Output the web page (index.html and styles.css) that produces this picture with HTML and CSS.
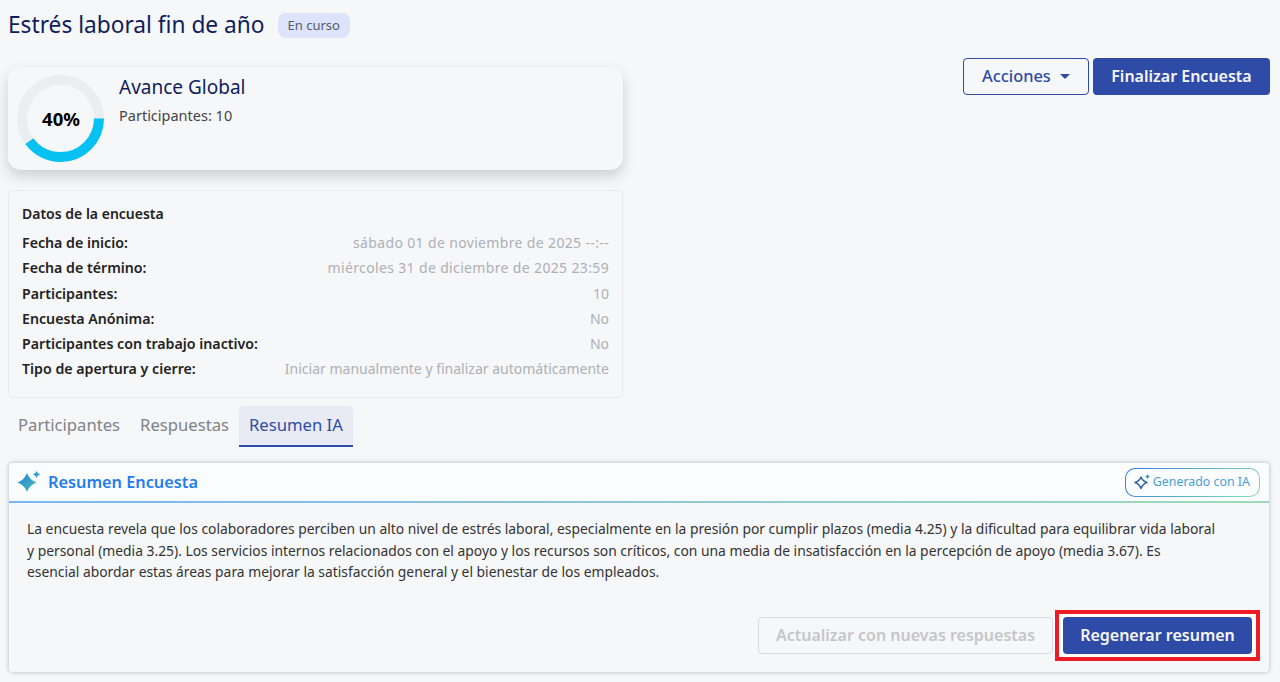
FILE: index.html
```html
<!DOCTYPE html>
<html lang="es">
<head>
    <meta charset="UTF-8">
    <meta name="viewport" content="width=device-width, initial-scale=1.0">
    <title>Estrés laboral fin de año</title>
    <link rel="stylesheet" href="styles.css">
</head>
<body>
    <div class="page-title">
        <h1>Estrés laboral fin de año</h1>
        <span class="status-badge">En curso</span>
    </div>

    <div class="top-row">
        <div class="left-col">
            <div class="progress-card">
                <div class="donut">
                    <svg width="87" height="87" viewBox="0 0 87 87">
                        <circle cx="43.5" cy="43.5" r="38.5" fill="none" stroke="#ebeef0" stroke-width="10"/>
                        <circle cx="43.5" cy="43.5" r="38.5" fill="none" stroke="#06c1f1" stroke-width="10" pathLength="100" stroke-dasharray="40 60"/>
                    </svg>
                    <span class="donut-label">40%</span>
                </div>
                <div class="progress-info">
                    <h2>Avance Global</h2>
                    <p>Participantes: 10</p>
                </div>
            </div>

            <div class="data-card">
                <h3>Datos de la encuesta</h3>
                <div class="data-row"><strong>Fecha de inicio:</strong><span class="data-date">sábado 01 de noviembre de 2025 --:--</span></div>
                <div class="data-row"><strong>Fecha de término:</strong><span class="data-date">miércoles 31 de diciembre de 2025 23:59</span></div>
                <div class="data-row"><strong>Participantes:</strong><span>10</span></div>
                <div class="data-row"><strong>Encuesta Anónima:</strong><span>No</span></div>
                <div class="data-row"><strong>Participantes con trabajo inactivo:</strong><span>No</span></div>
                <div class="data-row"><strong>Tipo de apertura y cierre:</strong><span>Iniciar manualmente y finalizar automáticamente</span></div>
            </div>
        </div>

        <div class="actions">
            <button type="button" class="btn btn-outline">Acciones <span class="caret"></span></button>
            <button type="button" class="btn btn-primary btn-finish">Finalizar Encuesta</button>
        </div>
    </div>

    <div class="tabs">
        <div class="tab">Participantes</div>
        <div class="tab">Respuestas</div>
        <div class="tab active">Resumen IA</div>
    </div>

    <div class="summary-card">
        <div class="summary-header">
            <div class="summary-title">
                <svg width="24" height="24" viewBox="0 0 24 24">
                    <defs>
                        <linearGradient id="sparkGrad" x1="0" y1="0" x2="1" y2="1">
                            <stop offset="0" stop-color="#1a7df2"/>
                            <stop offset="1" stop-color="#4fc3a1"/>
                        </linearGradient>
                    </defs>
                    <path d="M10 3Q12.500 10 19.500 12.500 12.500 15 10 22 7.500 15 .5 12.500 7.500 10 10 3z" fill="url(#sparkGrad)"/>
                    <path d="M19.500 1Q20.300 3.700 23 4.500 20.300 5.300 19.500 8 18.700 5.300 16 4.500 18.700 3.700 19.500 1z" fill="#2f9fd8"/>
                </svg>
                <span>Resumen Encuesta</span>
            </div>
            <div class="ia-badge">
                <svg width="17" height="17" viewBox="0 0 17 17">
                    <path d="M7 4Q8.500 8 13 9.500 8.500 11 7 15.500 5.500 11 1 9.500 5.500 8 7 4z" fill="none" stroke="#2f5fa8" stroke-width="1.400" stroke-linejoin="round"/>
                    <path d="M13.500 1Q14 3 16 3.500 14 4 13.500 6 13 4 11 3.500 13 3 13.500 1z" fill="#3a8fb0"/>
                </svg>
                <span>Generado con IA</span>
            </div>
        </div>
        <p class="summary-text">La encuesta revela que los colaboradores perciben un alto nivel de estrés laboral, especialmente en la presión por cumplir plazos (media 4.25) y la dificultad para equilibrar vida laboral y personal (media 3.25). Los servicios internos relacionados con el apoyo y los recursos son críticos, con una media de insatisfacción en la percepción de apoyo (media 3.67). Es esencial abordar estas áreas para mejorar la satisfacción general y el bienestar de los empleados.</p>
        <div class="summary-footer">
            <button type="button" class="btn btn-disabled">Actualizar con nuevas respuestas</button>
            <div class="highlight">
                <button type="button" class="btn btn-primary btn-regen">Regenerar resumen</button>
            </div>
        </div>
    </div>
</body>
</html>
```

FILE: styles.css
```css
* {
    box-sizing: border-box;
}
body {
    margin: 0;
    padding: 0 10px 0 8px;
    height: 682px;
    overflow: hidden;
    background: #f6f7f9;
    font-family: "Noto Sans", "Open Sans", sans-serif;
    color: #212529;
}
.page-title {
    display: flex;
    align-items: center;
    gap: 13px;
    height: 51px;
}
.page-title h1 {
    margin: 0 0 2px;
    font-size: 22.700px;
    font-weight: 400;
    color: #101d5c;
}
.status-badge {
    padding: 3px 10px;
    background: #dce3fa;
    border-radius: 8px;
    font-size: 13px;
    line-height: 19px;
    color: #555b6e;
}
.top-row {
    display: flex;
    justify-content: space-between;
    align-items: flex-start;
    margin-top: 16px;
}
.left-col {
    width: 615px;
}
.progress-card {
    display: flex;
    height: 103px;
    padding: 8px 9px;
    gap: 15px;
    border-radius: 13px;
    background: #f6f7f9;
    box-shadow: 0 6px 14px rgba(0,0,0,0.17);
}
.donut {
    position: relative;
    width: 87px;
    height: 87px;
    flex: none;
}
.donut-label {
    position: absolute;
    top: 33px;
    left: 0;
    width: 88px;
    text-align: center;
    font-size: 18.500px;
    line-height: 22px;
    font-weight: 700;
    color: #000;
}
.progress-info h2 {
    margin: 0;
    font-size: 19px;
    line-height: 25px;
    font-weight: 400;
    color: #101d5c;
}
.progress-info p {
    margin: 3px 0 0;
    font-size: 14.500px;
    line-height: 24px;
    color: #444;
}
.data-card {
    margin-top: 20px;
    height: 208px;
    padding: 12px 13px 0 13px;
    border: 1px solid #e8eaee;
    border-radius: 5px;
}
.data-card h3 {
    margin: 0 0 5px;
    font-size: 14px;
    line-height: 22px;
    font-weight: 600;
    color: #222;
}
.data-row {
    display: flex;
    justify-content: space-between;
    font-size: 14.200px;
    line-height: 25.300px;
}
.data-row strong {
    font-weight: 600;
    color: #222;
}
.data-row span {
    font-size: 14px;
    color: #adb0b5;
}
.data-row .data-date {
    letter-spacing: 0.35px;
}
.actions {
    display: flex;
    gap: 4px;
    margin-top: -9px;
}
.btn {
    height: 37px;
    border-radius: 4px;
    border: 1px solid transparent;
    font-family: inherit;
    font-size: 16px;
    font-weight: 500;
    padding: 0 0 2px;
}
.btn-outline {
    width: 126px;
    background: transparent;
    border-color: #2f4ba8;
    color: #2f4ba8;
    font-size: 16.400px;
}
.caret {
    display: inline-block;
    margin-left: 5px;
    vertical-align: 3px;
    border-top: 5px solid #2f4ba8;
    border-left: 5.500px solid transparent;
    border-right: 5.500px solid transparent;
}
.btn-primary {
    background: #2f4ba8;
    color: #f6f7f9;
    font-weight: 600;
}
.btn-finish {
    width: 177px;
}
.tabs {
    display: flex;
    margin-top: 8px;
    height: 41px;
}
.tab {
    padding: 0 10px;
    font-size: 16.650px;
    line-height: 38px;
    color: #7f8288;
}
.tab.active {
    color: #2f4ba8;
    background: #e8ebf3;
    border-bottom: 2px solid #2f4ba8;
    border-radius: 4px 4px 0 0;
}
.summary-card {
    margin: 16px 1px 0;
    height: 209px;
    border-radius: 4px;
    background: #f6f7f9;
    box-shadow: 0 0 4px rgba(40,50,90,0.35);
    overflow: hidden;
}
.summary-header {
    display: flex;
    justify-content: space-between;
    align-items: center;
    height: 40px;
    padding: 0 9px 0 8px;
    background: #fbfcfd;
    border-bottom: 2px solid;
    border-image: linear-gradient(90deg, #7ab6f5, #9ddcb8) 1;
}
.summary-title {
    display: flex;
    align-items: center;
    gap: 7px;
    font-size: 16.300px;
    font-weight: 600;
    color: #1f7df0;
}
.ia-badge {
    display: flex;
    align-items: center;
    gap: 2px;
    height: 29px;
    padding: 0 9px 2px 8px;
    border: 1px solid transparent;
    border-radius: 10px;
    background: linear-gradient(#fbfcfd, #fbfcfd) padding-box, linear-gradient(135deg, #2f7bea, #8fdcb0) border-box;
    font-size: 12.400px;
    color: #4a9fd8;
}
.summary-text {
    margin: 15px 53px 0 18px;
    font-size: 13.850px;
    line-height: 21.500px;
    color: #333;
}
.summary-footer {
    display: flex;
    justify-content: flex-end;
    align-items: center;
    gap: 2px;
    margin-top: 27.500px;
    padding-right: 9px;
}
.btn-disabled {
    width: 295px;
    background: transparent;
    border-color: #d8dadd;
    color: #c4c6c9;
    font-weight: 600;
}
.highlight {
    display: flex;
    padding: 3px 4px;
    border: 4px solid #ed1c24;
    background: #fff;
}
.btn-regen {
    width: 189px;
}
```
